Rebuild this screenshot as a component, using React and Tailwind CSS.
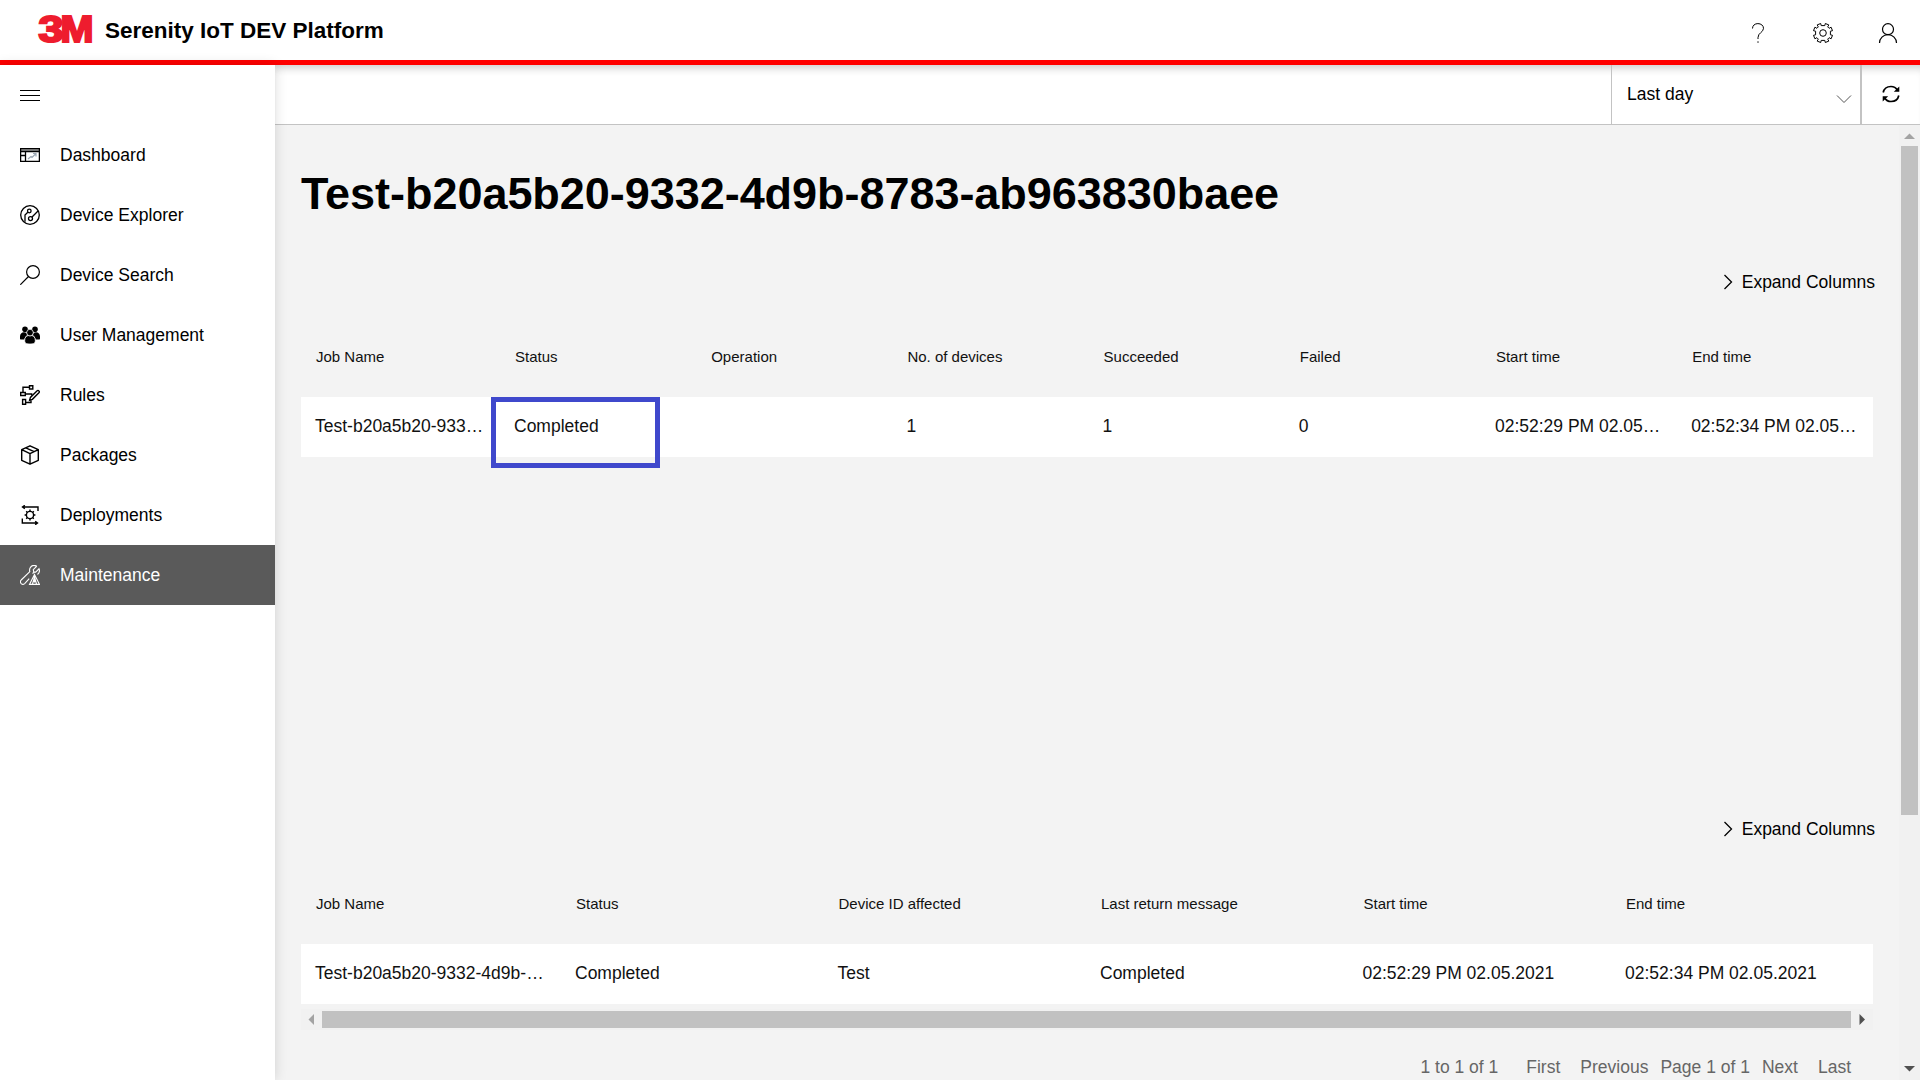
import React from "react";

function Svg({ children, className = "", sw = 1, ...rest }) {
  return (
    <svg
      width="20"
      height="20"
      viewBox="0 0 20 20"
      fill="none"
      stroke="currentColor"
      strokeWidth={sw}
      className={"block shrink-0 " + className}
      {...rest}
    >
      {children}
    </svg>
  );
}

const DashboardIcon = () => (
  <Svg>
    <path d="M0.5 5h19" stroke="#999" strokeWidth="2" />
    <path d="M0.600 3.600h18.800v12.800H0.600z M0.500 6.500h19 M5.500 6.500v10 M0.500 10.500h5" strokeWidth="1.300" />
    <path d="M8 14l3-2.500 1 1 3.500-3.500M13 8.500h3v3" stroke="#9aa5b1" strokeWidth="1.200" />
  </Svg>
);
const ExplorerIcon = () => (
  <Svg sw={1.3}>
    <circle cx="10" cy="10" r="9.3" />
    <circle cx="9.3" cy="6" r="1.8" />
    <circle cx="10.5" cy="13.6" r="2" />
    <path d="M7.8 7.2L5 10v6.8M11.8 12.2L18 6" />
  </Svg>
);
const SearchIcon = () => (
  <Svg sw={1.2}>
    <circle cx="13" cy="7" r="6.4" />
    <path d="M8.5 11.5L0.3 19.7" />
  </Svg>
);
const UsersIcon = () => (
  <Svg fill="currentColor" stroke="none">
    <circle cx="5" cy="4.3" r="2.8" />
    <circle cx="15" cy="4.3" r="2.8" />
    <path d="M0 11.5C0 8.8 1.6 7.2 4 7.2c1 0 1.8.3 2.4.9l.8 2.2c-1.8.8-2.6 2.4-2.7 4.2H1C.3 14.5 0 14 0 13.400zM20 11.500c0-2.700-1.600-4.300-4-4.300-1 0-1.800.3-2.400.9l-.8 2.200c1.800.8 2.600 2.400 2.700 4.200H19c.7 0 1-.5 1-1.100z" />
    <g stroke="#fff" strokeWidth="0.7">
      <path d="M4.700 15.500c0-3.100 1.800-4.900 3.800-4.900.8.3 2.200.3 3 0 2 0 3.800 1.800 3.800 4.900 0 2-.8 3-2.200 3.200-2 .4-4.200.4-6.200 0-1.400-.2-2.200-1.200-2.200-3.200z" />
      <circle cx="10" cy="7.600" r="3.300" />
    </g>
  </Svg>
);
const RulesIcon = () => (
  <Svg sw={1.4}>
    <path d="M9.500 0.700h3.300v3.300H9.500zM0.700 7.500h4.600v3H0.700zM2.600 14.500h3v4.700h-3zM9.500 2.300H3v5.200M5.200 9h6.500v1.500M5.600 17.500H11V15.500" />
    <path d="M9.600 15.400l.8-3 6.500-6.500c.7-.7 1.500-.7 2 0 .6.6.5 1.300 0 1.900l-6.500 6.500z" />
  </Svg>
);
const PackageIcon = () => (
  <Svg sw={1.4}>
    <path d="M10 0.800l8.300 3.900v10.600L10 19.200l-8.300-3.900V4.700zM1.700 4.700L10 8.600l8.300-3.900M10 8.600v10.600M5.800 2.800l8.300 3.900" strokeLinejoin="round" />
  </Svg>
);
const DeployIcon = () => (
  <Svg sw={1.4}>
    <path d="M18 6V2H2.500M4.800 0.300L2.500 2l2.300 1.700M2.300 13.500V18h15.200M15.200 16.300l2.300 1.700-2.300 1.700" />
    <circle cx="10" cy="10" r="3.600" />
    <path d="M10 4.600v1.800M10 13.600v1.800M4.600 10h1.800M13.600 10h1.800M6.200 6.200l1.200 1.200M12.600 12.600l1.200 1.200M13.800 6.200l-1.200 1.200M7.400 12.600l-1.200 1.200" />
  </Svg>
);
const WrenchIcon = () => (
  <Svg sw={1.1}>
    <path d="M16.800 1.200c-2.500-1.300-5.300-.6-6.600 1.500-.7 1.300-.8 2.600-.4 4L1.200 15c-1 1.100-.9 2.600 0 3.600 1 .9 2.400.9 3.500 0l4.500-4.900M16.800 1.200l-3.500 3.500.4 2 2 .4L19 3.800c.9 2 .2 4.300-1.500 5.700M12.500 8.500l2-1.500" />
    <path d="M14.500 9.500l5 9.900H9.500zM14.500 11v6.500M14.500 12l-2 7M14.500 12l2 7" />
  </Svg>
);

const NAV = [
  ["Dashboard", DashboardIcon],
  ["Device Explorer", ExplorerIcon],
  ["Device Search", SearchIcon],
  ["User Management", UsersIcon],
  ["Rules", RulesIcon],
  ["Packages", PackageIcon],
  ["Deployments", DeployIcon],
  ["Maintenance", WrenchIcon],
];

function Header() {
  return (
    <header className="flex h-[65px] shrink-0 items-center border-b-[5px] border-[#ff0000] bg-white pl-[34px] pr-[22px]">
      <svg width="63" height="50" viewBox="-4 -10 63 50" className="mb-0.5 block overflow-visible" role="img" aria-label="3M">
        <g fill="#ee1c2e" stroke="#ee1c2e" strokeWidth="2.200" fontFamily="Liberation Sans" fontWeight="700" fontSize="37">
          <text x="0.500" y="27.500" textLength="25" lengthAdjust="spacingAndGlyphs">3</text>
          <text x="22.500" y="27.500" textLength="33" lengthAdjust="spacingAndGlyphs">M</text>
        </g>
      </svg>
      <div className="ml-2 pt-px text-[22.500px] leading-[30px] font-bold">Serenity IoT DEV Platform</div>
      <div className="ml-auto flex items-center gap-[45px] pt-1.5">
        <Svg>
          <path d="M4.500 5.500C4.500 2.500 6.800 0.600 9.900 0.600s5.600 1.900 5.600 4.700c0 4-5.500 4.500-5.500 9.200v1.500M10 18.300v1.500" />
        </Svg>
        <Svg sw={1}>
          <circle cx="10" cy="10" r="3.300" />
          <path
            strokeLinejoin="round"
            d="M8.200 2.600L7.700 0.500 4.200 1.900l1.100 2-1.400 1.400-2-1.100L0.500 7.700l2.100.5v3.600l-2.100.5 1.400 3.500 2-1.100 1.400 1.400-1.100 2 3.500 1.400.5-2.100h3.600l.5 2.100 3.500-1.400-1.100-2 1.400-1.400 2 1.100 1.400-3.500-2.100-.5V8.200l2.100-.5-1.400-3.500-2 1.100-1.400-1.400 1.100-2L12.300 0.500l-.5 2.100z"
          />
        </Svg>
        <Svg sw={1.200}>
          <circle cx="10" cy="6.200" r="5.500" />
          <path d="M1.500 20c0-4.700 3.700-8.300 8.500-8.300s8.500 3.600 8.500 8.300" />
        </Svg>
      </div>
    </header>
  );
}

function Sidebar() {
  return (
    <nav className="relative z-20 w-[275px] shrink-0 bg-white shadow-[0_0_12px_rgba(0,0,0,0.14)]">
      <div className="flex h-[60px] items-center pl-5">
        <Svg>
          <path d="M0 5.500h20M0 10.500h20M0 15.500h20" />
        </Svg>
      </div>
      {NAV.map(([label, Icon]) => (
        <div
          key={label}
          className={
            "flex h-[60px] items-center gap-5 pl-5 " + (label === "Maintenance" ? "bg-[#5a5a5a] text-white" : "text-black")
          }
        >
          <Icon />
          <span>{label}</span>
        </div>
      ))}
    </nav>
  );
}

function Toolbar() {
  return (
    <div className="flex h-[60px] shrink-0 justify-end border-b border-[#c3c3c3] bg-white shadow-[inset_0_9px_8px_-6px_rgba(0,0,0,0.2)]">
      <div className="flex w-[251px] items-center justify-between border-r-2 border-l border-[#c3c3c3] pr-2 pb-0.5 pl-[15px]">
        <span>Last day</span>
        <svg width="16" height="10" viewBox="0 0 16 10" fill="none" stroke="#555" className="mt-2.5 block">
          <path d="M1 1.500l7 7 7-7" />
        </svg>
      </div>
      <div className="flex w-[58px] items-center pb-px pl-5">
        <svg width="18" height="18" viewBox="0 0 18 18" fill="none" stroke="#000" strokeWidth="1.700" className="block">
          <path d="M1.200 7.500C2 3.800 5 1.500 9 1.500c2.800 0 5 1.300 6.500 3.800M16.800 10.500c-.8 3.700-3.800 6-7.800 6-2.800 0-5-1.300-6.500-3.800" />
          <path d="M17.300 1.500v5.300h-5.500z M0.700 16.500v-5.300h5.500z" fill="#000" stroke="none" />
        </svg>
      </div>
    </div>
  );
}

function ExpandColumns() {
  return (
    <div className="-mr-px flex h-6 items-center justify-end gap-[9px]">
      <svg width="9" height="16" viewBox="0 0 9 16" fill="none" stroke="#000" strokeWidth="1.300" className="mb-px block">
        <path d="M0.500 1l7 7-7 7" />
      </svg>
      <span>Expand Columns</span>
    </div>
  );
}

function Table({ cols, headers, cells }) {
  return (
    <div className="mr-px text-[#111]">
      <div className={"grid h-20 items-center text-[15px] " + cols}>
        {headers.map((h) => (
          <div key={h} className="pl-[15px] whitespace-nowrap">
            {h}
          </div>
        ))}
      </div>
      <div className={"grid h-[60px] items-center bg-white pb-[3px] " + cols}>
        {cells.map((c, i) => (
          <div key={i} className="pl-3.5 whitespace-nowrap">
            {c}
          </div>
        ))}
      </div>
    </div>
  );
}

function HorizontalScrollbar() {
  return (
    <div className="mt-[5px] mr-px flex h-[21px] items-center bg-[#f1f1f1]">
      <svg width="21" height="21" className="block">
        <path d="M13 5v11l-5.500-5.500z" fill="#a3a3a3" />
      </svg>
      <div className="h-[17px] grow bg-[#c1c1c1]" />
      <svg width="22" height="21" className="block">
        <path d="M8.500 5v11l5.500-5.500z" fill="#505050" />
      </svg>
    </div>
  );
}

function VerticalScrollbar() {
  return (
    <div className="flex w-[21px] shrink-0 flex-col items-center bg-[#f1f1f1]">
      <svg width="21" height="21" className="block shrink-0">
        <path d="M5 14h11l-5.500-5.500z" fill="#a3a3a3" />
      </svg>
      <div className="h-[669px] w-[17px] bg-[#c1c1c1]" />
      <svg width="21" height="21" className="mt-auto block shrink-0">
        <path d="M5 7h11l-5.500 5.500z" fill="#505050" />
      </svg>
    </div>
  );
}

export default function App() {
  return (
    <div className="flex h-[1080px] w-[1920px] flex-col overflow-hidden bg-white font-['Liberation_Sans',Arial,sans-serif] text-[17.500px] leading-6 text-black">
      <Header />
      <div className="flex min-h-0 grow">
        <Sidebar />
        <div className="flex min-w-0 grow flex-col">
          <Toolbar />
          <div className="flex min-h-0 grow bg-[#f3f3f3]">
            <main className="relative flex min-w-0 grow flex-col overflow-hidden pr-[25px] pl-[26px]">
              <h1 className="mt-[39px] h-[60px] text-[45px] leading-[60px] font-bold tracking-[-0.04px] whitespace-nowrap">
                Test-b20a5b20-9332-4d9b-8783-ab963830baee
              </h1>
              <section className="mt-[46px] h-[547px] shrink-0">
                <ExpandColumns />
                <div className="h-[23px]" />
                <Table
                  cols="grid-cols-[199px_196.200px_196.200px_196.200px_196.200px_196.200px_196.200px_1fr]"
                  headers={["Job Name", "Status", "Operation", "No. of devices", "Succeeded", "Failed", "Start time", "End time"]}
                  cells={["Test-b20a5b20-933…", "Completed", "", "1", "1", "0", "02:52:29 PM 02.05…", "02:52:34 PM 02.05…"]}
                />
              </section>
              <section className="shrink-0">
                <ExpandColumns />
                <div className="h-[23px]" />
                <Table
                  cols="grid-cols-[260px_262.500px_262.500px_262.500px_262.500px_1fr]"
                  headers={["Job Name", "Status", "Device ID affected", "Last return message", "Start time", "End time"]}
                  cells={["Test-b20a5b20-9332-4d9b-…", "Completed", "Test", "Completed", "02:52:29 PM 02.05.2021", "02:52:34 PM 02.05.2021"]}
                />
                <HorizontalScrollbar />
                <div className="mt-[25px] flex justify-end pr-[23px] text-[#666]">
                  <span>1 to 1 of 1</span>
                  <span className="ml-7">First</span>
                  <span className="ml-5">Previous</span>
                  <span className="ml-3">Page 1 of 1</span>
                  <span className="ml-3">Next</span>
                  <span className="ml-5">Last</span>
                </div>
              </section>
              <div className="absolute top-[272px] left-[216px] h-[71px] w-[169px] border-[5px] border-[#3f48cc]" />
            </main>
            <VerticalScrollbar />
          </div>
        </div>
      </div>
    </div>
  );
}
